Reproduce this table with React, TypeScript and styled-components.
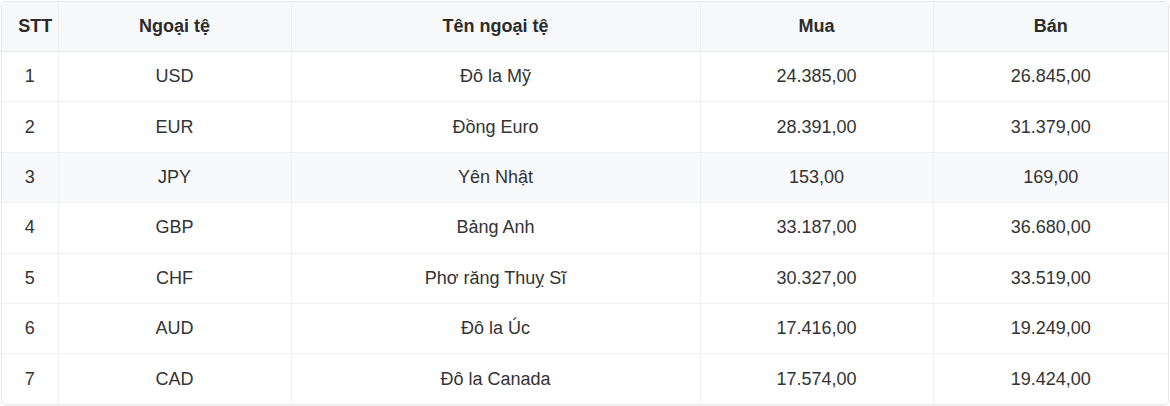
import React from 'react';
import styled, { createGlobalStyle } from 'styled-components';

interface Rate {
  code: string;
  name: string;
  buy: string;
  sell: string;
}

const rates: Rate[] = [
  { code: 'USD', name: 'Đô la Mỹ', buy: '24.385,00', sell: '26.845,00' },
  { code: 'EUR', name: 'Đồng Euro', buy: '28.391,00', sell: '31.379,00' },
  { code: 'JPY', name: 'Yên Nhật', buy: '153,00', sell: '169,00' },
  { code: 'GBP', name: 'Bảng Anh', buy: '33.187,00', sell: '36.680,00' },
  { code: 'CHF', name: 'Phơ răng Thuỵ Sĩ', buy: '30.327,00', sell: '33.519,00' },
  { code: 'AUD', name: 'Đô la Úc', buy: '17.416,00', sell: '19.249,00' },
  { code: 'CAD', name: 'Đô la Canada', buy: '17.574,00', sell: '19.424,00' },
];

const App: React.FC = () => {
  return (
    <>
      <GlobalStyle />
      <Wrapper>
        <Table>
          <colgroup>
            <col style={{ width: 56 }} />
            <col style={{ width: 233 }} />
            <col style={{ width: 409 }} />
            <col style={{ width: 233 }} />
            <col />
          </colgroup>
          <thead>
            <tr>
              <Th>STT</Th>
              <Th>Ngoại tệ</Th>
              <Th>Tên ngoại tệ</Th>
              <Th>Mua</Th>
              <Th>Bán</Th>
            </tr>
          </thead>
          <tbody>
            {rates.map((r, i) => (
              <Row key={r.code} $active={i === 2}>
                <Td>{i + 1}</Td>
                <Td>{r.code}</Td>
                <Td>{r.name}</Td>
                <Td>{r.buy}</Td>
                <Td>{r.sell}</Td>
              </Row>
            ))}
          </tbody>
        </Table>
      </Wrapper>
    </>
  );
};

export default App;

const GlobalStyle = createGlobalStyle`
  body {
    margin: 0;
    background: #fff;
    font-family: "Liberation Sans", Arial, sans-serif;
  }
`;

const Wrapper = styled.div`
  width: 1166px;
  margin: 1px;
  border: 1px solid #e6e8eb;
  border-radius: 5px;
  overflow: hidden;
  box-shadow: 0 1px 2px rgba(0, 0, 0, 0.06);
`;

const Table = styled.table`
  width: 100%;
  border-collapse: collapse;
  table-layout: fixed;
  font-size: 18px;
  color: #333;
`;

const Th = styled.th`
  height: 49px;
  padding: 0 8px;
  background: #f7f8fa;
  font-weight: bold;
  color: #2b2b2b;
  text-align: center;
  white-space: nowrap;
  border-bottom: 1px solid #e6e8eb;
  border-right: 1px solid #eceef1;

  &:first-child {
    padding: 0 0 0 11px;
  }

  &:last-child {
    border-right: none;
  }
`;

const Row = styled.tr<{ $active?: boolean }>`
  background: ${(p) => (p.$active ? '#f8f9fb' : '#fff')};

  &:last-child td {
    border-bottom: none;
  }
`;

const Td = styled.td`
  height: 49.4px;
  padding: 0 8px;
  text-align: center;
  border-bottom: 1px solid #eef0f2;
  border-right: 1px solid #f0f1f3;

  &:last-child {
    border-right: none;
  }
`;
